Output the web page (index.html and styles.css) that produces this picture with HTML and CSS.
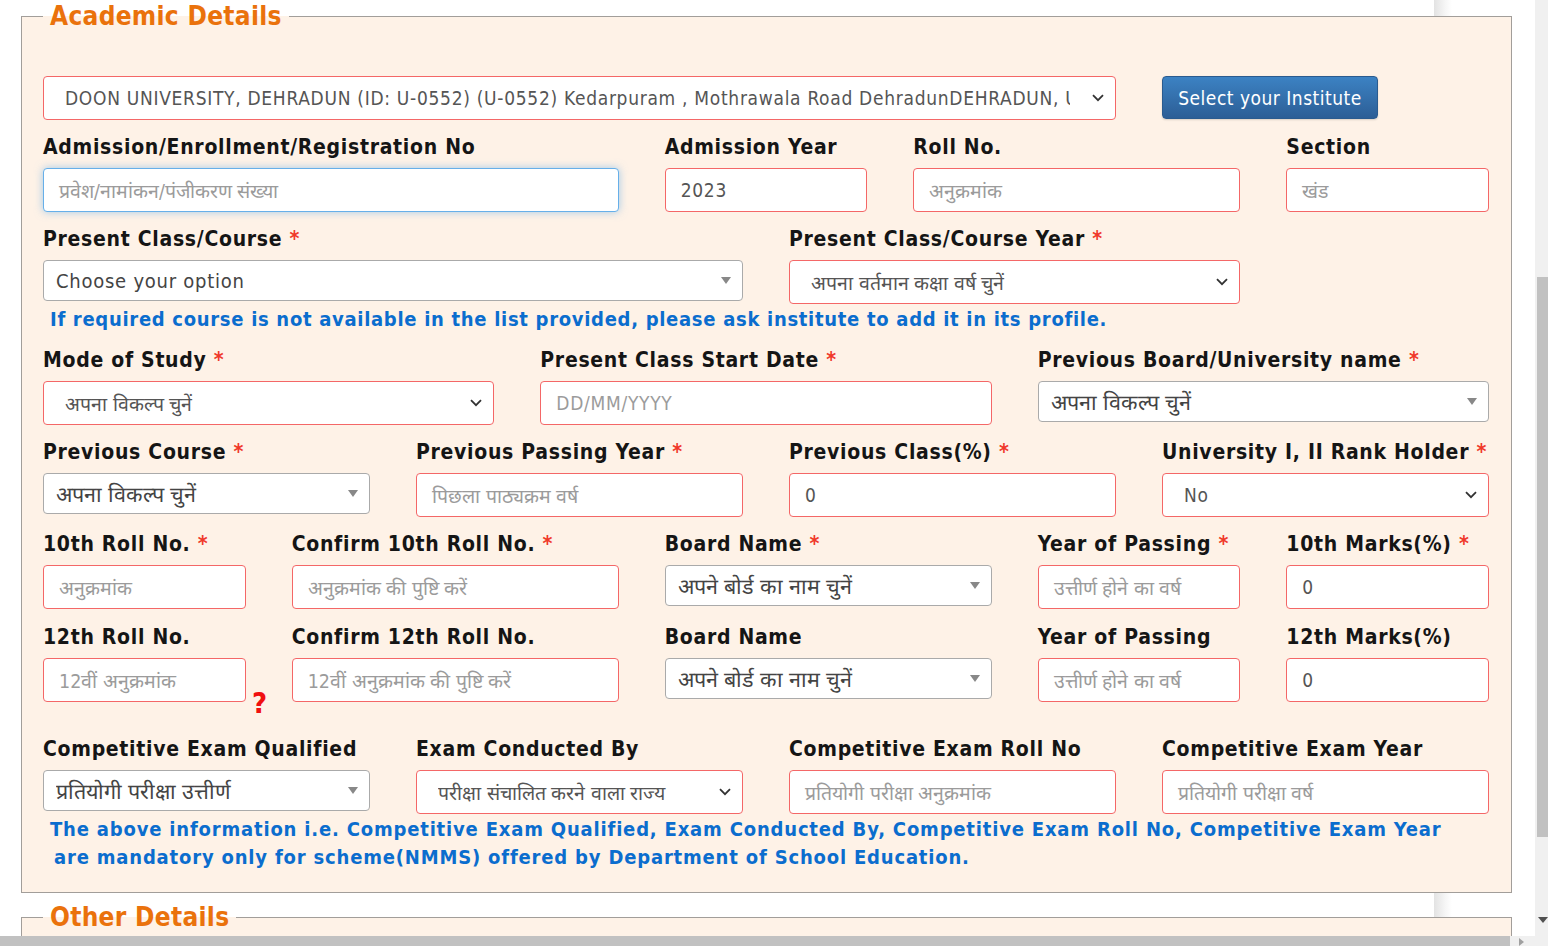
FILE: index.html
```html
<!DOCTYPE html>
<html lang="en">
<head>
<meta charset="utf-8">
<title>Academic Details</title>
<link rel="stylesheet" href="styles.css">
</head>
<body>
<div class="page">
  <fieldset class="panel">
    <legend>Academic Details</legend>

    <div class="row r0">
      <div class="s9">
        <div class="ctl native">
          <span class="txt">DOON UNIVERSITY, DEHRADUN (ID: U-0552) (U-0552) Kedarpuram , Mothrawala Road DehradunDEHRADUN, UTTARAKHAND</span>
          <svg class="chev" width="12" height="8" viewBox="0 0 12 8"><path d="M1 1.2 L6 6.2 L11 1.2" fill="none" stroke="#333" stroke-width="1.8"/></svg>
        </div>
      </div>
      <div class="s3">
        <button class="btn" type="button">Select your Institute</button>
      </div>
    </div>

    <div class="row">
      <div class="s5">
        <label class="label">Admission/Enrollment/Registration No</label>
        <div class="ctl ph focus"><span class="hi">प्रवेश/नामांकन/पंजीकरण संख्या</span></div>
      </div>
      <div class="s2">
        <label class="label">Admission Year</label>
        <div class="ctl">2023</div>
      </div>
      <div class="s3">
        <label class="label">Roll No.</label>
        <div class="ctl ph"><span class="hi">अनुक्रमांक</span></div>
      </div>
      <div class="s2">
        <label class="label">Section</label>
        <div class="ctl ph"><span class="hi">खंड</span></div>
      </div>
    </div>

    <div class="row r2">
      <div class="s6">
        <label class="label">Present Class/Course <span class="req">*</span></label>
        <div class="ctl s2box"><span class="txt">Choose your option</span><span class="tri"></span></div>
      </div>
      <div class="s4">
        <label class="label">Present Class/Course Year <span class="req">*</span></label>
        <div class="ctl native"><span class="txt hi">अपना वर्तमान कक्षा वर्ष चुनें</span>
          <svg class="chev" width="12" height="8" viewBox="0 0 12 8"><path d="M1 1.2 L6 6.2 L11 1.2" fill="none" stroke="#333" stroke-width="1.8"/></svg></div>
      </div>
    </div>
    <p class="note n1">If required course is not available in the list provided, please ask institute to add it in its profile.</p>

    <div class="row">
      <div class="s4">
        <label class="label">Mode of Study <span class="req">*</span></label>
        <div class="ctl native"><span class="txt hi">अपना विकल्प चुनें</span>
          <svg class="chev" width="12" height="8" viewBox="0 0 12 8"><path d="M1 1.2 L6 6.2 L11 1.2" fill="none" stroke="#333" stroke-width="1.8"/></svg></div>
      </div>
      <div class="s4">
        <label class="label">Present Class Start Date <span class="req">*</span></label>
        <div class="ctl ph">DD/MM/YYYY</div>
      </div>
      <div class="s4">
        <label class="label">Previous Board/University name <span class="req">*</span></label>
        <div class="ctl s2box"><span class="txt hi">अपना विकल्प चुनें</span><span class="tri"></span></div>
      </div>
    </div>

    <div class="row">
      <div class="s3">
        <label class="label">Previous Course <span class="req">*</span></label>
        <div class="ctl s2box"><span class="txt hi">अपना विकल्प चुनें</span><span class="tri"></span></div>
      </div>
      <div class="s3">
        <label class="label">Previous Passing Year <span class="req">*</span></label>
        <div class="ctl ph"><span class="hi">पिछला पाठ्यक्रम वर्ष</span></div>
      </div>
      <div class="s3">
        <label class="label">Previous Class(%) <span class="req">*</span></label>
        <div class="ctl">0</div>
      </div>
      <div class="s3">
        <label class="label">University I, II Rank Holder <span class="req">*</span></label>
        <div class="ctl native"><span class="txt">No</span>
          <svg class="chev" width="12" height="8" viewBox="0 0 12 8"><path d="M1 1.2 L6 6.2 L11 1.2" fill="none" stroke="#333" stroke-width="1.8"/></svg></div>
      </div>
    </div>

    <div class="row r5">
      <div class="s2">
        <label class="label">10th Roll No. <span class="req">*</span></label>
        <div class="ctl ph"><span class="hi">अनुक्रमांक</span></div>
      </div>
      <div class="s3">
        <label class="label">Confirm 10th Roll No. <span class="req">*</span></label>
        <div class="ctl ph"><span class="hi">अनुक्रमांक की पुष्टि करें</span></div>
      </div>
      <div class="s3">
        <label class="label">Board Name <span class="req">*</span></label>
        <div class="ctl s2box"><span class="txt hi">अपने बोर्ड का नाम चुनें</span><span class="tri"></span></div>
      </div>
      <div class="s2">
        <label class="label">Year of Passing <span class="req">*</span></label>
        <div class="ctl ph"><span class="hi">उत्तीर्ण होने का वर्ष</span></div>
      </div>
      <div class="s2">
        <label class="label">10th Marks(%) <span class="req">*</span></label>
        <div class="ctl">0</div>
      </div>
    </div>

    <div class="row r6">
      <div class="s2 has-help">
        <label class="label">12th Roll No.</label>
        <div class="ctl ph"><span class="hi">12वीं अनुक्रमांक</span></div>
        <span class="help">?</span>
      </div>
      <div class="s3">
        <label class="label">Confirm 12th Roll No.</label>
        <div class="ctl ph"><span class="hi">12वीं अनुक्रमांक की पुष्टि करें</span></div>
      </div>
      <div class="s3">
        <label class="label">Board Name</label>
        <div class="ctl s2box"><span class="txt hi">अपने बोर्ड का नाम चुनें</span><span class="tri"></span></div>
      </div>
      <div class="s2">
        <label class="label">Year of Passing</label>
        <div class="ctl ph"><span class="hi">उत्तीर्ण होने का वर्ष</span></div>
      </div>
      <div class="s2">
        <label class="label">12th Marks(%)</label>
        <div class="ctl">0</div>
      </div>
    </div>

    <div class="row r7">
      <div class="s3">
        <label class="label">Competitive Exam Qualified</label>
        <div class="ctl s2box"><span class="txt hi">प्रतियोगी परीक्षा उत्तीर्ण</span><span class="tri"></span></div>
      </div>
      <div class="s3">
        <label class="label">Exam Conducted By</label>
        <div class="ctl native"><span class="txt hi">परीक्षा संचालित करने वाला राज्य</span>
          <svg class="chev" width="12" height="8" viewBox="0 0 12 8"><path d="M1 1.2 L6 6.2 L11 1.2" fill="none" stroke="#333" stroke-width="1.8"/></svg></div>
      </div>
      <div class="s3">
        <label class="label">Competitive Exam Roll No</label>
        <div class="ctl ph"><span class="hi">प्रतियोगी परीक्षा अनुक्रमांक</span></div>
      </div>
      <div class="s3">
        <label class="label">Competitive Exam Year</label>
        <div class="ctl ph"><span class="hi">प्रतियोगी परीक्षा वर्ष</span></div>
      </div>
    </div>
    <p class="note n2">The above information i.e. Competitive Exam Qualified, Exam Conducted By, Competitive Exam Roll No, Competitive Exam Year<br><span class="indent">are mandatory only for scheme(NMMS) offered by Department of School Education.</span></p>
  </fieldset>

  <fieldset class="panel other">
    <legend>Other Details</legend>
  </fieldset>
</div>

<div class="vscroll"><div class="vthumb"></div><span class="varrow"></span></div>
<div class="hscroll"><div class="hthumb"></div><span class="harrow"></span></div>
</body>
</html>
```

FILE: styles.css
```css
* { box-sizing: border-box; }

html, body {
  margin: 0;
  height: 100%;
  overflow: hidden;
}

body {
  font-family: "DejaVu Sans Condensed", "DejaVu Sans", sans-serif;
  color: #151515;
  background: linear-gradient(90deg, #fff 0, #fff 1434px, #e3e3e3 1434px, #f7f7f7 1446px, #fff 1452px, #fff 100%);
}

.page {
  width: 1512px;
  padding-left: 21px;
}

.panel {
  margin: 0;
  min-width: 0;
  border: 1px solid #a29e9a;
  background: #fef2e7;
  padding: 44px 22px 21px 21px;
}

.panel legend {
  font-size: 26px;
  font-weight: bold;
  line-height: 32px;
  letter-spacing: 0.3px;
  color: #ea720c;
  padding: 0 7px;
}

.panel.other {
  margin-top: 8px;
  height: 120px;
}

.row {
  display: grid;
  grid-template-columns: repeat(12, minmax(0, 1fr));
  column-gap: 46px;
  margin-bottom: 14px;
}

.r2 { margin-bottom: 1px; }
.r5 { margin-bottom: 15px; }
.r6 { margin-bottom: 34px; }
.r7 { margin-bottom: 1px; }

.s2 { grid-column: span 2; }
.s3 { grid-column: span 3; }
.s4 { grid-column: span 4; }
.s5 { grid-column: span 5; }
.s6 { grid-column: span 6; }
.s9 { grid-column: span 9; }

.label {
  display: block;
  font-size: 21px;
  font-weight: bold;
  line-height: 24px;
  letter-spacing: 0.7px;
  padding-top: 1px;
  margin-bottom: 9px;
  white-space: nowrap;
}

.req { color: #f0392b; }

.ctl {
  height: 44px;
  border: 1px solid #f46767;
  border-radius: 4px;
  background: #fff;
  display: flex;
  align-items: center;
  padding: 0 15px;
  font-size: 19px;
  letter-spacing: 0.7px;
  color: #555;
  white-space: nowrap;
  overflow: hidden;
}

.ctl .txt {
  overflow: hidden;
  flex: 1 1 auto;
  min-width: 0;
}

.hi {
  letter-spacing: 0;
  font-size: 19.5px;
}

.ctl.ph { color: #9b9b9b; }

.ctl.focus {
  border-color: #66afe9;
  box-shadow: 0 0 8px rgba(102, 175, 233, 0.6);
}

.ctl.native {
  padding-left: 21px;
  padding-right: 11px;
}

.ctl.native .txt { margin-right: 22px; }

.chev { flex: 0 0 auto; }

.ctl.s2box {
  height: 41px;
  border-color: #aaa;
  padding: 0 11px 0 12px;
  font-size: 20px;
  letter-spacing: 0.75px;
  color: #444;
}

.ctl.s2box .hi {
  font-size: 21.5px;
  letter-spacing: 0;
}

.tri {
  flex: 0 0 auto;
  width: 0;
  height: 0;
  border-left: 5.5px solid transparent;
  border-right: 5.5px solid transparent;
  border-top: 7px solid #888;
}

.btn {
  display: block;
  width: 216px;
  height: 43px;
  border: 1px solid #2a5b8f;
  border-radius: 4px;
  background: linear-gradient(#3c82c3, #2c5e96);
  color: #fff;
  font-family: "DejaVu Sans Condensed", "DejaVu Sans", sans-serif;
  font-size: 19px;
  letter-spacing: 0.5px;
  padding: 0;
  box-shadow: 0 1px 2px rgba(0, 0, 0, 0.15);
}

.has-help { position: relative; }

.help {
  position: absolute;
  left: 209px;
  top: 64px;
  color: #f01010;
  font-size: 29px;
  font-weight: bold;
  line-height: 30px;
}

.note {
  margin: 0;
  color: #0b6dce;
  font-size: 20px;
  font-weight: bold;
  line-height: 28px;
  letter-spacing: 0.75px;
  padding-left: 7px;
  white-space: nowrap;
}

.n1 { margin-bottom: 14px; letter-spacing: 0.7px; }
.n2 { letter-spacing: 0.82px; }

.note .indent { padding-left: 4px; }

.vscroll {
  position: fixed;
  top: 0;
  right: 0;
  width: 13px;
  height: 936px;
  background: #f0f0f0;
}

.vthumb {
  position: absolute;
  top: 277px;
  left: 2px;
  right: 0;
  height: 560px;
  background: #c1c1c1;
}

.varrow {
  position: absolute;
  right: 0;
  top: 917px;
  width: 0;
  height: 0;
  border-left: 5px solid transparent;
  border-right: 5px solid transparent;
  border-top: 6px solid #505050;
}

.hscroll {
  position: fixed;
  left: 0;
  bottom: 0;
  width: 100%;
  height: 10px;
  background: #f0f0f0;
}

.hthumb {
  position: absolute;
  left: 0;
  top: 0;
  bottom: 0;
  width: 1510px;
  background: #c1c1c1;
}

.harrow {
  position: absolute;
  left: 1519px;
  top: 2px;
  width: 0;
  height: 0;
  border-top: 4px solid transparent;
  border-bottom: 4px solid transparent;
  border-left: 5px solid #a0a0a0;
}
```
